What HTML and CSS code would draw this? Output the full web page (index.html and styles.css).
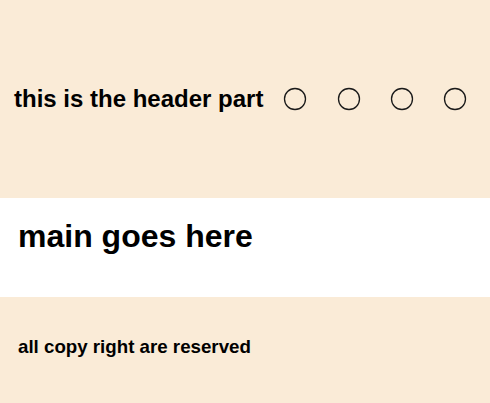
FILE: index.html
```html
<!DOCTYPE html>
<html lang="en">
<head>
<meta charset="utf-8">
<title>Layout</title>
<link rel="stylesheet" href="styles.css">
</head>
<body>
<header class="site-header">
  <h2 class="site-title">this is the header part</h2>
  <ul class="nav">
    <li class="nav-item"><svg class="dot" viewBox="0 0 24 24" width="24" height="24"><circle cx="12" cy="12" r="10.5"/></svg></li>
    <li class="nav-item"><svg class="dot" viewBox="0 0 24 24" width="24" height="24"><circle cx="12" cy="12" r="10.5"/></svg></li>
    <li class="nav-item"><svg class="dot" viewBox="0 0 24 24" width="24" height="24"><circle cx="12" cy="12" r="10.5"/></svg></li>
    <li class="nav-item"><svg class="dot" viewBox="0 0 24 24" width="24" height="24"><circle cx="12" cy="12" r="10.5"/></svg></li>
  </ul>
</header>
<main class="site-main">
  <h1 class="main-title">main goes here</h1>
</main>
<footer class="site-footer">
  <h3 class="footer-text">all copy right are reserved</h3>
</footer>
</body>
</html>
```
FILE: styles.css
```css
* { box-sizing: border-box; }
html, body {
  margin: 0;
  padding: 0;
  font-family: "Liberation Sans", Arial, sans-serif;
  color: #000;
  background: #faebd7;
}
.site-header {
  display: flex;
  align-items: center;
  height: 198px;
  padding-left: 14px;
  padding-bottom: 1px;
  background: #faebd7;
}
.site-title {
  margin: 0;
  font-size: 24px;
  font-weight: 700;
}
.nav {
  display: flex;
  gap: 29.3px;
  list-style: none;
  margin: 0 0 0 20px;
  padding: 0;
}
.nav-item { display: flex; }
.dot {
  display: block;
  fill: none;
  stroke: #1a1a1a;
  stroke-width: 1.3;
}
.site-main {
  height: 99px;
  background: #fff;
  padding: 20px 18px 0;
}
.main-title {
  margin: 0;
  font-size: 32px;
  font-weight: 700;
}
.site-footer {
  height: 106px;
  padding: 39px 18px 0;
  background: #faebd7;
}
.footer-text {
  margin: 0;
  font-size: 18.72px;
  font-weight: 700;
}
```
